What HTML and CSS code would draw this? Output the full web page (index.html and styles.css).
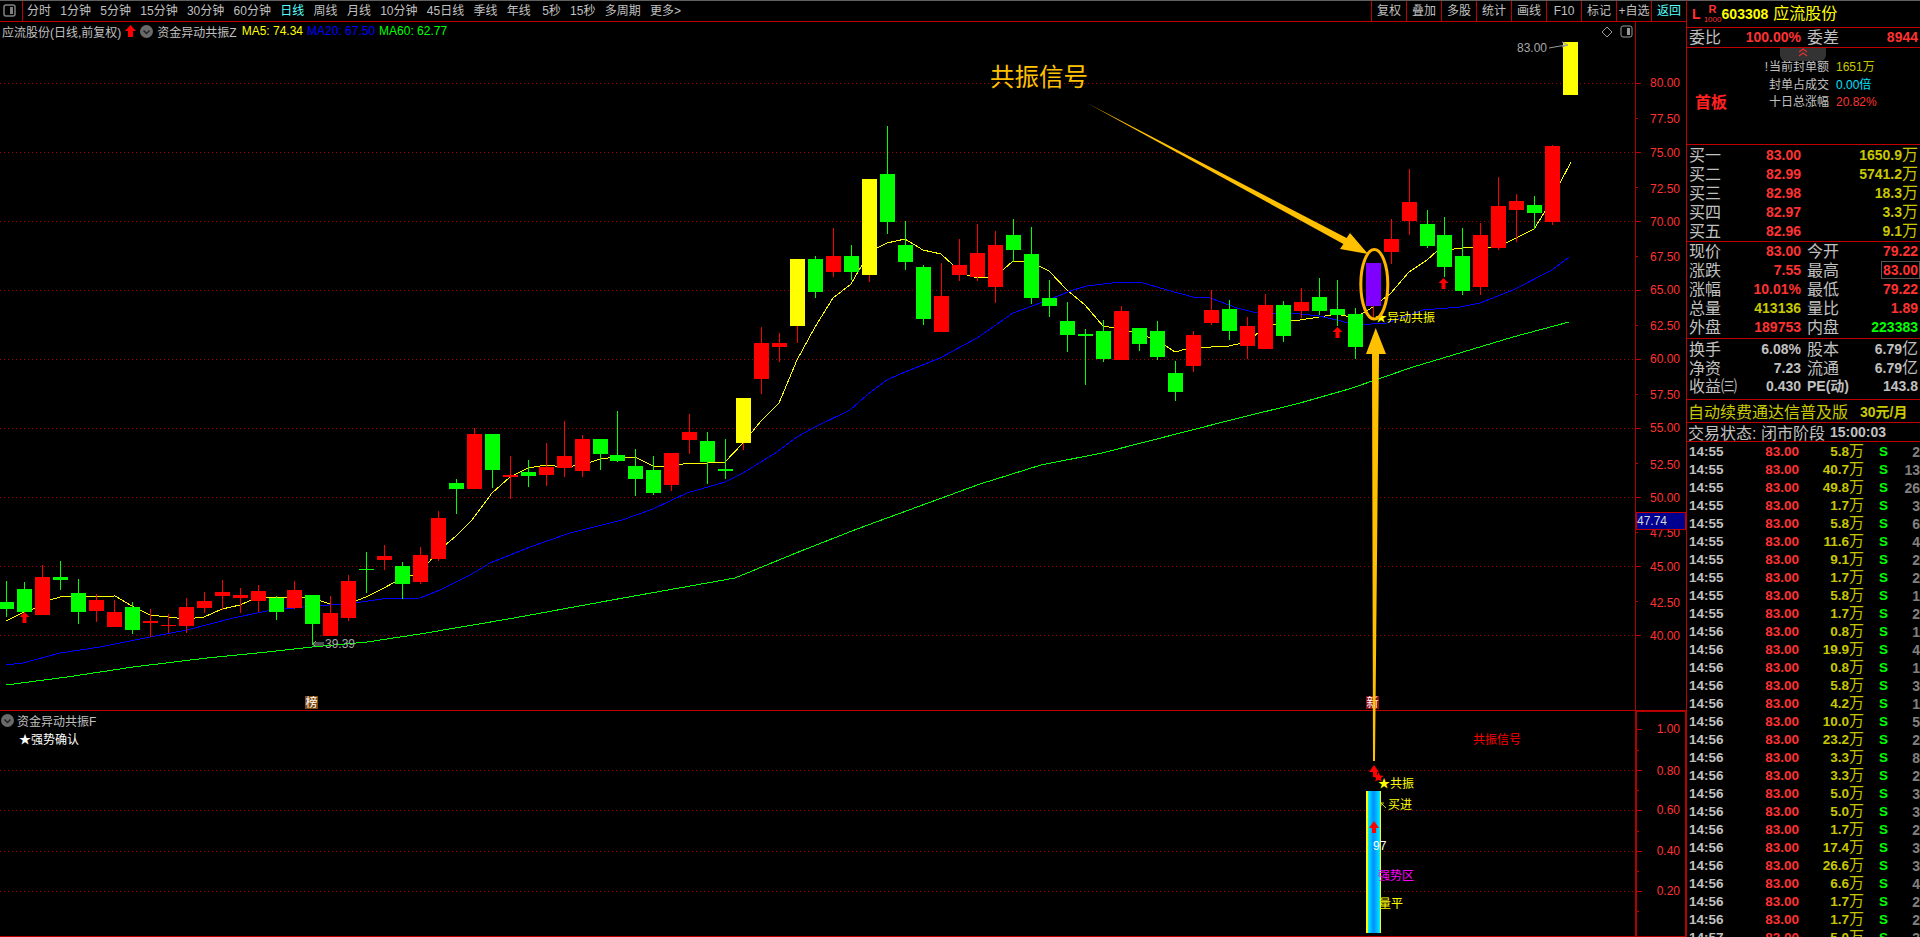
FILE: index.html
```html
<!DOCTYPE html>
<html lang="zh-CN">
<head>
<meta charset="utf-8">
<title>应流股份 日线</title>
<link rel="stylesheet" href="styles.css">
</head>
<body>
<div class="app">
<main class="main">
  <nav class="toolbar">
    <span class="tool-icon"><svg width="13" height="13" viewBox="0 0 13 13"><rect x="1" y="1" width="11" height="11" rx="2" class="ico-line"/><rect x="7" y="3" width="3" height="7" class="ico-fill"/></svg></span>
    <div class="periods">
      <span>分时</span><span>1分钟</span><span>5分钟</span><span>15分钟</span><span>30分钟</span><span>60分钟</span><span class="on">日线</span><span>周线</span><span>月线</span><span>10分钟</span><span>45日线</span><span>季线</span><span>年线</span><span class="wide">5秒</span><span>15秒</span><span>多周期</span><span>更多&gt;</span>
    </div>
    <div class="actions">
      <span>复权</span><span>叠加</span><span>多股</span><span>统计</span><span>画线</span><span>F10</span><span>标记</span><span>+自选</span><span class="on">返回</span>
    </div>
  </nav>
  <section class="pane upper">
    <div class="plot">
      <div class="plot-head">
        <span>应流股份(日线,前复权)</span>
        <svg class="head-arrow" width="11" height="12" viewBox="0 0 11 12"><path d="M5.5 0L11 6H8V12H3V6H0Z"/></svg>
        <svg class="head-circle" width="13" height="13" viewBox="0 0 13 13"><circle cx="6.5" cy="6.5" r="6.5"/><path d="M3.5 5.5L6.5 8.5L9.5 5.5"/></svg>
        <span class="indicator">资金异动共振Z</span>
        <span class="ma5">MA5: 74.34</span>
        <span class="ma20">MA20: 67.50</span>
        <span class="ma60">MA60: 62.77</span>
      </div>
    </div>
    <div class="axis"></div>
  </section>
  <section class="pane lower">
    <div class="plot">
      <div class="plot-head">
        <svg class="head-circle" width="13" height="13" viewBox="0 0 13 13"><circle cx="6.5" cy="6.5" r="6.5"/><path d="M3.5 5.5L6.5 8.5L9.5 5.5"/></svg>
        <span>资金异动共振F</span>
      </div>
      <div class="signal-note">★强势确认</div>
    </div>
    <div class="axis"></div>
  </section>
  <svg class="canvas" width="1686" height="937" viewBox="0 0 1686 937">
    <g id="grid" class="grid"></g>
    <g id="lines"></g>
    <g id="candles"></g>
    <g class="axis-text">
      <text x="1680" y="87">80.00</text><text x="1680" y="123">77.50</text><text x="1680" y="157">75.00</text><text x="1680" y="193">72.50</text><text x="1680" y="226">70.00</text><text x="1680" y="261">67.50</text><text x="1680" y="294">65.00</text><text x="1680" y="330">62.50</text><text x="1680" y="363">60.00</text><text x="1680" y="399">57.50</text><text x="1680" y="432">55.00</text><text x="1680" y="469">52.50</text><text x="1680" y="502">50.00</text><text x="1680" y="537">47.50</text><text x="1680" y="571">45.00</text><text x="1680" y="607">42.50</text><text x="1680" y="640">40.00</text>
      <text x="1680" y="733">1.00</text><text x="1680" y="775">0.80</text><text x="1680" y="814">0.60</text><text x="1680" y="855">0.40</text><text x="1680" y="895">0.20</text>
    </g>
    <rect class="last-box" x="1636" y="512" width="49" height="17"/>
    <text class="last-text" x="1637" y="525">47.74</text>

    <path class="marker" d="M1602 32L1607 27L1612 32L1607 37Z"/>
    <rect class="marker" x="1621" y="26" width="11" height="11" rx="2"/>
    <rect class="marker-fill" x="1627" y="28" width="3" height="7"/>
    <text class="t-gray" x="1517" y="52">83.00</text>
    <path class="marker" d="M1549 48L1566 45M1562 42L1568 45L1562 47"/>
    <text class="t-gray" x="325" y="648">39.39</text>
    <path class="marker" d="M313 643H324M313 645H324M316 641L313 644L316 647"/>

    <rect class="tag-brown" x="305" y="696" width="13" height="13"/>
    <text class="t-tag" x="305.5" y="707">榜</text>
    <rect class="tag-red" x="1366" y="696" width="13" height="13"/>
    <text class="t-tag" x="1366.5" y="707">新</text>

    <text class="t-yellow" x="1375" y="322">★异动共振</text>
    <text class="t-title" x="990" y="86">共振信号</text>
    <polygon class="callout" points="1087,103 1346.6,238 1350,233 1368,254 1340,249 1343.4,244"/>
    <ellipse class="callout-ring" cx="1374.3" cy="284.3" rx="13.5" ry="34.7"/>
    <polygon class="callout" points="1375.7,328 1386,354 1379,354 1375,761 1373,761 1372,354 1366,354"/>

    <rect class="bar" x="1366" y="791" width="15" height="142"/>
    <path class="red-shape" d="M1374 765L1379 772H1377V777H1373V772H1369Z"/>
    <polygon class="red-shape" points="1378.5,772 1380,775.5 1383.5,775.8 1381,778.2 1381.8,781.5 1378.5,779.8 1375.2,781.5 1376,778.2 1373.5,775.8 1377,775.5"/>
    <path class="red-shape" d="M1374 821L1379 828H1376V833H1372V828H1369Z"/>
    <text class="t-yellow" x="1378" y="788">★共振</text>
    <path class="t-yellow-line" d="M1386 808L1381 803M1381 806V803H1384"/>
    <text class="t-yellow" x="1388" y="809">买进</text>
    <text class="t-white" x="1373" y="850">97</text>
    <text class="t-magenta" x="1378" y="880">强势区</text>
    <text class="t-yellow" x="1379" y="908">量平</text>
    <text class="t-red" x="1473" y="744">共振信号</text>
  </svg>
</main>

<aside class="side">
  <header class="stock">
    <b class="market">L</b>
    <span class="rank"><b>R</b><i>1000</i></span>
    <b class="code">603308</b>
    <span class="name">应流股份</span>
  </header>
  <div class="quote-grid ratio">
    <span class="lab">委比</span><b class="up">100.00%</b><span class="lab lab2">委差</span><b class="up">8944</b>
  </div>
  <section class="seal">
    <span class="pill"><svg width="12" height="9" viewBox="0 0 12 9"><path d="M2 4L6 1L10 4M2 8L6 5L10 8"/></svg></span>
    <span class="seal-lab"><i>!</i>当前封单额</span><span class="seal-val dim">1651万</span>
    <span class="seal-lab">封单占成交</span><span class="seal-val cyan">0.00倍</span>
    <strong class="first-board">首板</strong>
    <span class="seal-lab">十日总涨幅</span><span class="seal-val up">20.82%</span>
  </section>
  <section class="book">
    <div class="bid"><span class="lab">买一</span><b class="up">83.00</b><b class="dim vol">1650.9<i>万</i></b></div>
    <div class="bid"><span class="lab">买二</span><b class="up">82.99</b><b class="dim vol">5741.2<i>万</i></b></div>
    <div class="bid"><span class="lab">买三</span><b class="up">82.98</b><b class="dim vol">18.3<i>万</i></b></div>
    <div class="bid"><span class="lab">买四</span><b class="up">82.97</b><b class="dim vol">3.3<i>万</i></b></div>
    <div class="bid"><span class="lab">买五</span><b class="up">82.96</b><b class="dim vol">9.1<i>万</i></b></div>
  </section>
  <section class="quotes">
    <div class="quote-grid"><span class="lab">现价</span><b class="up">83.00</b><span class="lab lab2">今开</span><b class="up">79.22</b></div>
    <div class="quote-grid"><span class="lab">涨跌</span><b class="up">7.55</b><span class="lab lab2">最高</span><b class="up"><em class="boxed">83.00</em></b></div>
    <div class="quote-grid"><span class="lab">涨幅</span><b class="up">10.01%</b><span class="lab lab2">最低</span><b class="up">79.22</b></div>
    <div class="quote-grid"><span class="lab">总量</span><b class="dim">413136</b><span class="lab lab2">量比</span><b class="up">1.89</b></div>
    <div class="quote-grid"><span class="lab">外盘</span><b class="up">189753</b><span class="lab lab2">内盘</span><b class="down">223383</b></div>
  </section>
  <section class="stats">
    <div class="quote-grid"><span class="lab">换手</span><b>6.08%</b><span class="lab lab2">股本</span><b class="vol">6.79<i>亿</i></b></div>
    <div class="quote-grid"><span class="lab">净资</span><b>7.23</b><span class="lab lab2">流通</span><b class="vol">6.79<i>亿</i></b></div>
    <div class="quote-grid"><span class="lab">收益㈢</span><b>0.430</b><span class="lab lab2 pe">PE(动)</span><b>143.8</b></div>
  </section>
  <div class="promo"><span>自动续费通达信普及版</span><b>30元/月</b></div>
  <div class="status"><span>交易状态: 闭市阶段</span><b>15:00:03</b></div>
  <ul class="trades">
    <li><b>14:55</b><b class="up">83.00</b><span class="tv"><b>5.8</b><i>万</i></span><b class="s">S</b><span class="n">2</span></li>
    <li><b>14:55</b><b class="up">83.00</b><span class="tv"><b>40.7</b><i>万</i></span><b class="s">S</b><span class="n">13</span></li>
    <li><b>14:55</b><b class="up">83.00</b><span class="tv"><b>49.8</b><i>万</i></span><b class="s">S</b><span class="n">26</span></li>
    <li><b>14:55</b><b class="up">83.00</b><span class="tv"><b>1.7</b><i>万</i></span><b class="s">S</b><span class="n">3</span></li>
    <li><b>14:55</b><b class="up">83.00</b><span class="tv"><b>5.8</b><i>万</i></span><b class="s">S</b><span class="n">6</span></li>
    <li><b>14:55</b><b class="up">83.00</b><span class="tv"><b>11.6</b><i>万</i></span><b class="s">S</b><span class="n">4</span></li>
    <li><b>14:55</b><b class="up">83.00</b><span class="tv"><b>9.1</b><i>万</i></span><b class="s">S</b><span class="n">2</span></li>
    <li><b>14:55</b><b class="up">83.00</b><span class="tv"><b>1.7</b><i>万</i></span><b class="s">S</b><span class="n">2</span></li>
    <li><b>14:55</b><b class="up">83.00</b><span class="tv"><b>5.8</b><i>万</i></span><b class="s">S</b><span class="n">1</span></li>
    <li><b>14:55</b><b class="up">83.00</b><span class="tv"><b>1.7</b><i>万</i></span><b class="s">S</b><span class="n">2</span></li>
    <li><b>14:56</b><b class="up">83.00</b><span class="tv"><b>0.8</b><i>万</i></span><b class="s">S</b><span class="n">1</span></li>
    <li><b>14:56</b><b class="up">83.00</b><span class="tv"><b>19.9</b><i>万</i></span><b class="s">S</b><span class="n">4</span></li>
    <li><b>14:56</b><b class="up">83.00</b><span class="tv"><b>0.8</b><i>万</i></span><b class="s">S</b><span class="n">1</span></li>
    <li><b>14:56</b><b class="up">83.00</b><span class="tv"><b>5.8</b><i>万</i></span><b class="s">S</b><span class="n">3</span></li>
    <li><b>14:56</b><b class="up">83.00</b><span class="tv"><b>4.2</b><i>万</i></span><b class="s">S</b><span class="n">1</span></li>
    <li><b>14:56</b><b class="up">83.00</b><span class="tv"><b>10.0</b><i>万</i></span><b class="s">S</b><span class="n">5</span></li>
    <li><b>14:56</b><b class="up">83.00</b><span class="tv"><b>23.2</b><i>万</i></span><b class="s">S</b><span class="n">2</span></li>
    <li><b>14:56</b><b class="up">83.00</b><span class="tv"><b>3.3</b><i>万</i></span><b class="s">S</b><span class="n">8</span></li>
    <li><b>14:56</b><b class="up">83.00</b><span class="tv"><b>3.3</b><i>万</i></span><b class="s">S</b><span class="n">2</span></li>
    <li><b>14:56</b><b class="up">83.00</b><span class="tv"><b>5.0</b><i>万</i></span><b class="s">S</b><span class="n">3</span></li>
    <li><b>14:56</b><b class="up">83.00</b><span class="tv"><b>5.0</b><i>万</i></span><b class="s">S</b><span class="n">3</span></li>
    <li><b>14:56</b><b class="up">83.00</b><span class="tv"><b>1.7</b><i>万</i></span><b class="s">S</b><span class="n">2</span></li>
    <li><b>14:56</b><b class="up">83.00</b><span class="tv"><b>17.4</b><i>万</i></span><b class="s">S</b><span class="n">3</span></li>
    <li><b>14:56</b><b class="up">83.00</b><span class="tv"><b>26.6</b><i>万</i></span><b class="s">S</b><span class="n">3</span></li>
    <li><b>14:56</b><b class="up">83.00</b><span class="tv"><b>6.6</b><i>万</i></span><b class="s">S</b><span class="n">4</span></li>
    <li><b>14:56</b><b class="up">83.00</b><span class="tv"><b>1.7</b><i>万</i></span><b class="s">S</b><span class="n">2</span></li>
    <li><b>14:56</b><b class="up">83.00</b><span class="tv"><b>1.7</b><i>万</i></span><b class="s">S</b><span class="n">2</span></li>
    <li><b>14:57</b><b class="up">83.00</b><span class="tv"><b>5.0</b><i>万</i></span><b class="s">S</b><span class="n">3</span></li>
  </ul>
</aside>
</div>
<script src="chart.js"></script>
</body>
</html>
```
FILE: styles.css
```css
* { box-sizing: border-box; margin: 0; padding: 0; }
html, body { height: 100%; background: #000; overflow: hidden; }
body { font-family: "Liberation Sans", "Noto Sans CJK SC", sans-serif; font-size: 12px; color: #c0c0c0; }
i, em { font-style: normal; }
ul { list-style: none; }

.app { display: flex; width: 1920px; height: 937px; }
.main { position: relative; width: 1686px; height: 937px; flex: none; }

/* toolbar */
.toolbar { display: flex; height: 22px; border-top: 1px solid #606060; border-bottom: 1px solid #c00000; line-height: 20px; }
.tool-icon { flex: none; width: 23px; border-right: 1px solid #c00000; padding: 3px 0 0 3px; line-height: 0; }
.ico-line { fill: none; stroke: #808080; stroke-width: 1.5; }
.ico-fill { fill: #808080; }
.periods { display: flex; gap: 9.3px; padding-left: 4px; white-space: nowrap; }
.periods .wide { margin-left: 2px; }
.on { color: #55ffff; }
.actions { display: flex; margin-left: auto; }
.actions span { width: 35px; text-align: center; border-left: 1px solid #c00000; white-space: nowrap; }

/* panes */
.pane { display: flex; }
.upper { height: 689px; border-bottom: 1px solid #c00000; }
.upper .plot { width: 1636px; border-right: 1px solid #b00000; }
.upper .axis { width: 50px; }
.lower { height: 226px; border-bottom: 1px solid #c00000; }
.lower .plot { width: 1635px; }
.lower .axis { width: 51px; border: 1px solid #b00000; border-left-width: 2px; margin-bottom: -1px; }
.plot-head { display: flex; align-items: center; height: 18px; padding-left: 2px; gap: 4px; white-space: nowrap; }
.lower .plot-head { padding-left: 1px; gap: 3px; }
.head-arrow { fill: #ff0000; }
.head-circle circle { fill: #6a6a6a; }
.head-circle path { fill: none; stroke: #222; stroke-width: 1.5; }
.indicator { margin-right: 1px; }
.ma5 { color: #ffff00; }
.ma20 { color: #0000ff; }
.ma60 { color: #00ff00; }
.signal-note { color: #fff; padding: 2px 0 0 19px; line-height: 18px; }

/* chart canvas */
.canvas { position: absolute; left: 0; top: 0; }
.canvas text { font-size: 12px; }
.grid .dot { stroke: #a80000; stroke-width: 1; stroke-dasharray: 1 3; shape-rendering: crispEdges; }
.grid .tick { stroke: #c00000; stroke-width: 1; shape-rendering: crispEdges; }
.ma-line { fill: none; stroke-width: 1; shape-rendering: crispEdges; }
.ma-y { stroke: #ffff00; }
.ma-b { stroke: #0000ff; }
.ma-g { stroke: #00ff00; }
#candles rect { shape-rendering: crispEdges; }
.k-r { fill: #ff0000; }
.k-g { fill: #00ff00; }
.k-y { fill: #ffff00; }
.k-p { fill: #8000ff; }
.axis-text text { fill: #ff3232; text-anchor: end; }
.last-box { fill: #000090; stroke: #c00000; stroke-width: 1; shape-rendering: crispEdges; }
.canvas .last-text { fill: #d8d8d8; }
.marker { fill: none; stroke: #9a9a9a; stroke-width: 1; }
.marker-fill { fill: #9a9a9a; }
.canvas .t-gray { fill: #a8a8a8; }
.tag-brown { fill: #7d4a10; }
.tag-red { fill: #8a0f0f; }
.canvas .t-tag { fill: #fff; }
.canvas .t-yellow { fill: #ffff00; }
.t-yellow-line { fill: none; stroke: #d0d000; stroke-width: 1; }
.canvas .t-title { fill: #ffc000; font-size: 24.5px; }
.callout { fill: #ffc000; }
.callout-ring { fill: none; stroke: #ffb400; stroke-width: 3; }
.bar { fill: url(#barFill); }
.red-shape { fill: #ff0000; }
.canvas .t-white { fill: #fff; }
.canvas .t-magenta { fill: #ff00ff; }
.canvas .t-red { fill: #ff0000; }

/* side panel */
.side { flex: none; width: 234px; height: 937px; border-left: 1px solid #c00000; border-top: 1px solid #606060; overflow: hidden; }
.side b { font-weight: 700; font-size: 14px; }
.side section, .stock, .ratio, .promo, .status { border-bottom: 1px solid #c00000; }
.stock { display: flex; align-items: center; height: 27px; padding-left: 5px; color: #ffff00; }
.market { color: #ff3232; }
.rank { display: flex; flex-direction: column; align-items: center; width: 16px; margin-left: 4px; color: #ff3232; line-height: 9px; }
.side .rank b { font-size: 11px; line-height: 11px; }
.code { margin-left: 1px; }
.name { font-size: 16px; line-height: 26px; margin-left: 5px; }
.lab { font-size: 16px; white-space: nowrap; }
.up { color: #ff3232; }
.down { color: #00ff00; }
.dim { color: #c8c800; }
.cyan { color: #00e0ff; }
.side i { font-weight: 400; font-size: 16px; }
.side .rank i { font-size: 8px; }

.quote-grid { display: grid; grid-template-columns: 34px 78px 36px 1fr; align-items: center; height: 19px; line-height: 19px; padding: 0 2px; white-space: nowrap; }
.quote-grid > b { text-align: right; }
.lab2 { padding-left: 6px; }
.pe { font-size: 14px; font-weight: 700; }
.ratio { height: 20px; }
.boxed { display: inline-block; border: 1px solid #555; padding: 0 1px; line-height: 16px; margin-right: -2px; }

.seal { position: relative; display: grid; grid-template-columns: 69px 66px 1fr; grid-auto-rows: 17.5px; column-gap: 7px; height: 97px; padding-top: 11px; line-height: 17.5px; white-space: nowrap; }
.seal-lab { grid-column: 2; text-align: right; }
.seal-val { grid-column: 3; }
.side .seal-lab i { font-size: 12px; margin-right: 1px; }
.pill { position: absolute; left: 93px; top: 0; width: 46px; height: 13px; background: #333; border-radius: 0 0 6px 6px; text-align: center; line-height: 0; }
.pill path { fill: none; stroke: #e03030; stroke-width: 1.2; }
.first-board { grid-column: 1; grid-row: 3; color: #ff2020; font-size: 16px; padding-left: 8px; line-height: 17.5px; font-weight: 700; }

.book { height: 97px; }
.bid { display: grid; grid-template-columns: 34px 78px 1fr; align-items: center; height: 19px; line-height: 19px; padding: 0 2px; white-space: nowrap; }
.bid > b { text-align: right; }
.vol { white-space: nowrap; }
.quotes { height: 97px; }
.stats { height: 61px; }
.promo { display: flex; gap: 12px; align-items: center; height: 23px; padding-left: 1px; color: #c8c800; font-size: 16px; white-space: nowrap; }
.status { display: flex; gap: 5px; align-items: center; height: 19px; padding-left: 1px; font-size: 16px; white-space: nowrap; }

.trades li { display: grid; grid-template-columns: 50px 60px 65px 31px 1fr; align-items: center; height: 18px; line-height: 18px; padding-left: 2px; white-space: nowrap; }
.trades b { font-size: 13.5px; }
.side .trades i { font-size: 15px; }
.trades .up { text-align: right; }
.tv { text-align: right; color: #c8c800; }
.s { padding-left: 15px; color: #00ff00; }
.n { text-align: right; color: #808080; font-size: 14px; font-weight: 700; }
```
FILE: chart.js
```js
var NS = 'http://www.w3.org/2000/svg';
function el(parent, name, attrs) {
  var n = document.createElementNS(NS, name);
  for (var k in attrs) n.setAttribute(k, attrs[k]);
  parent.appendChild(n);
  return n;
}

/* type, body top, body bottom, wick top, wick bottom (page pixels) */
var K = [
['g',602,609,581,617],['g',589,612,582,612],['r',577,615,565,615],['g',577,580,561,590],['g',593,612,579,624],
['r',600,611,594,622],['r',612,627,600,627],['g',607,630,602,634],['r',621,623,609,637],['r',625,626,614,633],
['r',607,626,598,633],['r',601,608,592,613],['r',592,596,580,610],['r',595,598,588,613],['r',591,601,585,612],
['g',598,612,596,620],['r',590,608,581,609],['g',595,624,595,645],['r',613,636,596,636],['r',581,618,575,621],
['g',569,570,552,593],['r',556,560,545,570],['g',566,584,562,599],['r',555,582,547,584],['r',518,559,511,561],
['g',483,489,479,514],['r',434,489,428,489],['g',434,470,434,488],['r',475,477,456,499],['g',472,476,460,487],
['r',467,475,443,486],['r',456,468,421,477],['r',439,471,435,477],['g',439,454,439,470],['g',455,461,411,462],
['g',466,479,449,496],['g',470,493,456,495],['r',453,485,453,491],['r',432,440,414,454],['g',441,462,432,484],
['g',469,471,439,479],['y',398,443,398,450],['r',343,379,327,394],['r',343,347,333,362],['y',259,326,259,343],
['g',259,292,256,298],['r',256,272,228,277],['g',256,272,245,280],['y',179,275,179,282],['g',174,222,126,234],
['g',245,262,221,270],['g',267,319,265,325],['r',296,332,263,332],['r',265,275,239,281],['r',253,277,224,281],
['r',245,287,231,303],['g',235,250,219,262],['g',254,298,227,304],['g',298,306,280,317],['g',321,335,302,352],
['g',334,336,329,385],['g',331,359,320,362],['r',311,360,306,360],['g',328,344,328,351],['g',331,357,321,360],
['g',373,392,361,401],['r',335,366,331,372],['r',310,323,290,325],['g',309,331,300,340],['r',326,346,317,359],
['r',305,349,294,349],['g',305,336,301,342],['r',302,311,288,318],['g',297,311,278,315],['g',309,315,280,326],
['g',314,347,308,359],['p',263,306,263,317],['r',239,252,219,264],['r',202,221,169,235],['g',224,246,210,248],
['g',235,267,217,277],['g',256,291,228,295],['r',235,287,223,295],['r',206,248,177,250],['r',201,210,194,242],
['g',205,213,196,229],['r',146,222,145,225],['y',42,95,42,95]
];

var MA = {
  'ma-y': '6,621 24,612 42,606 50,600 60,597 115,596 132,606 150,615 168,617 186,619 204,617 222,609 240,605 258,597 276,597 294,597 312,598 330,604 348,604 366,597 384,588 402,578 420,573 438,551 456,536 472,520 492,493 510,477 528,468 546,465 564,467 582,465 600,459 617,457 635,457 653,466 671,466 689,463 707,463 725,462 743,443 761,421 779,403 797,360 815,327 833,298 851,284 862,265 877,248 887,243 905,239 923,250 941,254 953,265 967,275 977,278 988,277 1003,270 1013,261 1031,262 1049,271 1067,290 1085,305 1103,326 1121,329 1139,334 1157,340 1175,352 1193,347 1211,347 1229,346 1247,342 1265,327 1283,322 1300,320 1319,317 1337,314 1355,318 1373,307 1391,293 1409,272 1427,260 1437,251 1462,248 1498,247 1516,238 1534,229 1544,213 1560,183 1571,162',
  'ma-b': '6,665 23,663 60,653 100,647 150,637 187,630 233,618 267,611 312,606 347,604 382,599 420,598 440,590 470,575 490,563 530,547 570,533 622,520 653,509 687,493 725,482 743,473 777,452 797,437 813,428 850,410 867,395 887,380 900,374 940,358 977,338 1013,313 1043,302 1073,290 1087,286 1120,282 1140,282 1167,290 1193,297 1210,298 1237,308 1257,313 1300,314 1319,316 1337,320 1355,325 1387,323 1423,310 1460,307 1480,303 1513,290 1552,270 1569,257',
  'ma-g': '6,685 67,677 133,667 207,658 267,652 312,647 367,642 420,634 514,618 612,600 735,578 796,553 857,529 980,484 1041,465 1102,453 1235,419 1300,403 1349,389 1413,367 1513,337 1569,322'
};

var canvas = document.querySelector('.canvas');
var defs = el(canvas, 'defs', {});
canvas.insertBefore(defs, canvas.firstChild);
var grad = el(defs, 'linearGradient', { id: 'barFill', x1: 0, x2: 1, y1: 0, y2: 0 });
[[0,'#ffff00'],[0.1,'#ffff00'],[0.1,'#00ffff'],[0.3,'#00c0ff'],[0.5,'#0090ff'],[0.75,'#00c0ff'],[0.9,'#00e8ff'],[0.9,'#ffff00'],[1,'#ffff00']].forEach(function (s) {
  el(grad, 'stop', { offset: s[0], 'stop-color': s[1] });
});

/* grid and ticks */
var grid = document.getElementById('grid');
[83,152,221,290,359,428,497,566,635,770,810,851,891].forEach(function (y) {
  el(grid, 'line', { 'class': 'dot', x1: 0, x2: 1635, y1: y + 0.5, y2: y + 0.5 });
});
[83,152,221,290,359,428,497,566,635].forEach(function (y) {
  el(grid, 'line', { 'class': 'tick', x1: 1636, x2: 1641, y1: y + 0.5, y2: y + 0.5 });
});
[118,187,256,325,394,463,532,601].forEach(function (y) {
  el(grid, 'line', { 'class': 'tick', x1: 1636, x2: 1638, y1: y + 0.5, y2: y + 0.5 });
});
[729,770,810,851,891].forEach(function (y) {
  el(grid, 'line', { 'class': 'tick', x1: 1637, x2: 1642, y1: y + 0.5, y2: y + 0.5 });
});
[750,790,831,871,911].forEach(function (y) {
  el(grid, 'line', { 'class': 'tick', x1: 1637, x2: 1639, y1: y + 0.5, y2: y + 0.5 });
});

/* moving averages */
var lines = document.getElementById('lines');
Object.keys(MA).forEach(function (cls) {
  el(lines, 'polyline', { 'class': 'ma-line ' + cls, points: MA[cls] });
});

/* candles */
var g = document.getElementById('candles');
K.forEach(function (k, i) {
  var off = i >= 80 ? 2 : i >= 34 ? 1 : 0;
  var x = 6 + 18 * i - off;
  var wick = (k[0] === 'y' || k[0] === 'p') ? 'r' : k[0];
  el(g, 'rect', { 'class': 'k-' + wick, x: x, y: k[3], width: 1, height: k[4] - k[3] });
  el(g, 'rect', { 'class': 'k-' + k[0], x: x - 7, y: k[1], width: 15, height: k[2] - k[1] });
});

/* buy arrows on the price chart */
[[24,612],[1337,327],[1443,278]].forEach(function (p) {
  var x = p[0] + 0.5, y = p[1];
  el(g, 'path', { 'class': 'k-r', d: 'M' + x + ' ' + y + 'l5 5h-3v6h-4v-6h-3z' });
});
```
